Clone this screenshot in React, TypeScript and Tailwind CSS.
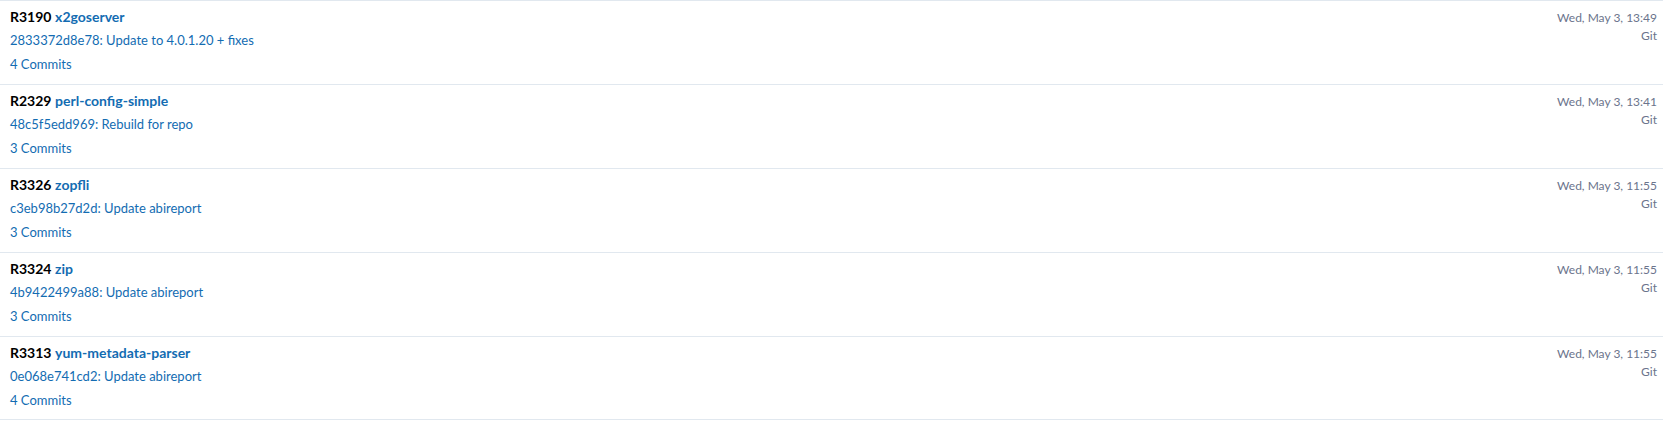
const rows = [
  {id: 'R3190', name: 'x2goserver', commit: '2833372d8e78: Update to 4.0.1.20 + fixes', count: 4, date: 'Wed, May 3, 13:49'},
  {id: 'R2329', name: 'perl-config-simple', commit: '48c5f5edd969: Rebuild for repo', count: 3, date: 'Wed, May 3, 13:41'},
  {id: 'R3326', name: 'zopfli', commit: 'c3eb98b27d2d: Update abireport', count: 3, date: 'Wed, May 3, 11:55'},
  {id: 'R3324', name: 'zip', commit: '4b9422499a88: Update abireport', count: 3, date: 'Wed, May 3, 11:55'},
  {id: 'R3313', name: 'yum-metadata-parser', commit: '0e068e741cd2: Update abireport', count: 4, date: 'Wed, May 3, 11:55'},
];

const App = () => {
  return (
    <div className="w-[1663px] bg-white font-['Lato','Liberation_Sans',sans-serif]">
      {rows.map((row, i) => (
        <div
          key={row.id}
          className={`flex h-[84px] justify-between border-t border-[#e1e8ef] pl-[10px] pr-[6px] ${i === rows.length - 1 ? 'border-b' : ''}`}
        >
          <div className="flex flex-col pt-[6px]">
            <div className="text-[14px] leading-[20px]">
              <span className="font-bold text-black">{row.id}</span>{' '}
              <a href="#" className="font-bold text-[#136cb2]">{row.name}</a>
            </div>
            <a href="#" className="mt-[3px] text-[13px] leading-[20px] text-[#136cb2]">{row.commit}</a>
            <a href="#" className="mt-[4px] text-[13px] leading-[20px] text-[#136cb2]">{row.count} Commits</a>
          </div>
          <div className="flex flex-col items-end pt-[9px] text-[12px] leading-[16px] text-[#6b748c]">
            <span>{row.date}</span>
            <span className="mt-[2px]">Git</span>
          </div>
        </div>
      ))}
    </div>
  );
};

export default App;
